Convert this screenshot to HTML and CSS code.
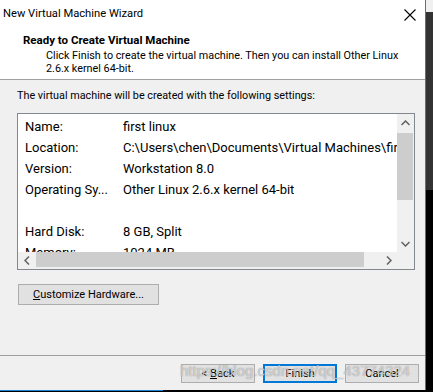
FILE: index.html
```html
<!DOCTYPE html>
<html>
<head>
<meta charset="utf-8">
<link rel="stylesheet" href="styles.css">
</head>
<body>
<div class="screen">
  <div class="window">
    <div class="titlebar">
      <span class="title">New Virtual Machine Wizard</span>
      <svg class="close" width="12" height="12" viewBox="0 0 12 12"><path d="M0.5 0.5 L11.5 11.5 M11.5 0.5 L0.5 11.5" stroke="#000" stroke-width="1.1" fill="none"/></svg>
    </div>
    <div class="header">
      <div class="h-title">Ready to Create Virtual Machine</div>
      <div class="h-desc">Click Finish to create the virtual machine. Then you can install Other Linux<br>2.6.x kernel 64-bit.</div>
    </div>
    <div class="body">
      <div class="intro">The virtual machine will be created with the following settings:</div>
      <div class="listbox">
        <div class="lb-main">
          <div class="lb-content">
            <div class="row"><span class="k">Name:</span><span class="v">first linux</span></div>
            <div class="row"><span class="k">Location:</span><span class="v">C:\Users\chen\Documents\Virtual Machines\first linux</span></div>
            <div class="row"><span class="k">Version:</span><span class="v">Workstation 8.0</span></div>
            <div class="row"><span class="k">Operating Sy...</span><span class="v">Other Linux 2.6.x kernel 64-bit</span></div>
            <div class="row"><span class="k"></span><span class="v"></span></div>
            <div class="row"><span class="k">Hard Disk:</span><span class="v">8 GB, Split</span></div>
            <div class="row"><span class="k">Memory:</span><span class="v">1024 MB</span></div>
          </div>
          <div class="vscroll">
            <div class="arrow"><svg width="9" height="6" viewBox="0 0 9 6"><path d="M0.5 5 L4.5 1 L8.5 5" stroke="#606060" stroke-width="1.5" fill="none"/></svg></div>
            <div class="vtrack"><div class="vthumb"></div></div>
            <div class="arrow"><svg width="9" height="6" viewBox="0 0 9 6"><path d="M0.5 1 L4.5 5 L8.5 1" stroke="#606060" stroke-width="1.5" fill="none"/></svg></div>
          </div>
        </div>
        <div class="hscroll-row">
          <div class="hscroll">
            <div class="arrow"><svg width="6" height="9" viewBox="0 0 6 9"><path d="M5 0.5 L1 4.5 L5 8.5" stroke="#606060" stroke-width="1.5" fill="none"/></svg></div>
            <div class="htrack"><div class="hthumb"></div></div>
            <div class="arrow"><svg width="6" height="9" viewBox="0 0 6 9"><path d="M1 0.5 L5 4.5 L1 8.5" stroke="#606060" stroke-width="1.5" fill="none"/></svg></div>
          </div>
          <div class="corner"></div>
        </div>
      </div>
      <button class="btn custom"><u>C</u>ustomize Hardware...</button>
    </div>
    <div class="footer">
      <button class="btn nav">&lt; <u>B</u>ack</button>
      <button class="btn nav default">Finish</button>
      <button class="btn nav">Cancel</button>
      <span class="watermark">https://blog.csdn.net/qq_43774324</span>
    </div>
  </div>
  <div class="side"><div class="side-top"></div><div class="side-mid"></div></div>
</div>
<div class="bottom"><div class="bottom-blue"></div></div>
</body>
</html>
```
FILE: styles.css
```css
* { box-sizing: border-box; }
html, body { margin: 0; padding: 0; }
body {
  width: 433px;
  height: 392px;
  overflow: hidden;
  background: #000;
  font-family: Roboto, "Open Sans", sans-serif;
  font-size: 10.8px;
  color: #000;
}
.screen { display: flex; height: 390px; }
.window {
  width: 426px;
  height: 390px;
  border-right: 1px solid #1883d7;
  background: #f0f0f0;
  display: flex;
  flex-direction: column;
}
.titlebar {
  height: 28px;
  background: #fff;
  display: flex;
  align-items: center;
  justify-content: space-between;
  padding: 0 9px 0 3px;
}
.title { font-size: 11.2px; line-height: 28px; }
.close { display: block; margin-top: 1px; }
.header {
  background: #fff;
  height: 52px;
  border-bottom: 1px solid #a0a0a0;
  padding: 5px 0 0 23px;
}
.h-title { font-weight: bold; font-size: 11.5px; line-height: 15px; }
.h-desc { padding-left: 23px; line-height: 13px; margin-top: 1px; }
.body { flex: 1; padding: 9px 0 0 17px; }
.intro { line-height: 14px; height: 24px; }
.listbox {
  width: 398px;
  height: 157px;
  border: 1px solid #828790;
  background: #fff;
  display: flex;
  flex-direction: column;
}
.lb-main { display: flex; height: 138px; }
.lb-content { width: 379px; overflow: hidden; padding-top: 2px; font-size: 13px; }
.row { display: flex; height: 21px; align-items: center; white-space: nowrap; }
.k { width: 105px; padding-left: 7px; flex: none; }
.v { flex: none; }
.vscroll { width: 17px; background: #f0f0f0; display: flex; flex-direction: column; }
.arrow { width: 17px; height: 17px; display: flex; align-items: center; justify-content: center; flex: none; }
.vtrack { flex: 1; padding: 2px 1px 0 0; }
.vthumb { height: 67px; background: #cdcdcd; }
.hscroll-row { display: flex; height: 17px; }
.hscroll { width: 379px; background: #f0f0f0; display: flex; }
.htrack { flex: 1; padding: 0 0 2px 1px; }
.hthumb { width: 328px; height: 15px; background: #cdcdcd; }
.corner { width: 17px; background: #f0f0f0; }
.btn {
  font-family: inherit;
  font-size: 11px;
  color: #000;
  background: #e1e1e1;
  border: 1px solid #adadad;
  padding: 0;
  margin: 0;
}
.custom { display: block; width: 141px; height: 21px; margin: 14px 0 0 1px; }
.footer {
  height: 35px;
  border-top: 1px solid #a0a0a0;
  display: flex;
  justify-content: flex-end;
  gap: 8px;
  padding: 8px 6px 0 0;
  position: relative;
}
.nav { width: 74px; height: 19px; line-height: 15px; }
.default { border: 2px solid #0078d7; }
.watermark {
  position: absolute;
  left: 180px;
  top: 6px;
  font-family: "Liberation Sans", Arial, sans-serif;
  font-size: 15px;
  color: rgba(255,255,255,0.6);
  text-shadow: 0 0 1px rgba(90,90,90,0.8);
  white-space: nowrap;
  pointer-events: none;
}
.side { width: 7px; display: flex; flex-direction: column; }
.side-top { height: 12px; background: #f0f0f0; }
.side-mid { height: 178px; background: #333; }
.bottom { height: 2px; background: #000; }
.bottom-blue { width: 163px; height: 1px; background: #1883d7; }
```
